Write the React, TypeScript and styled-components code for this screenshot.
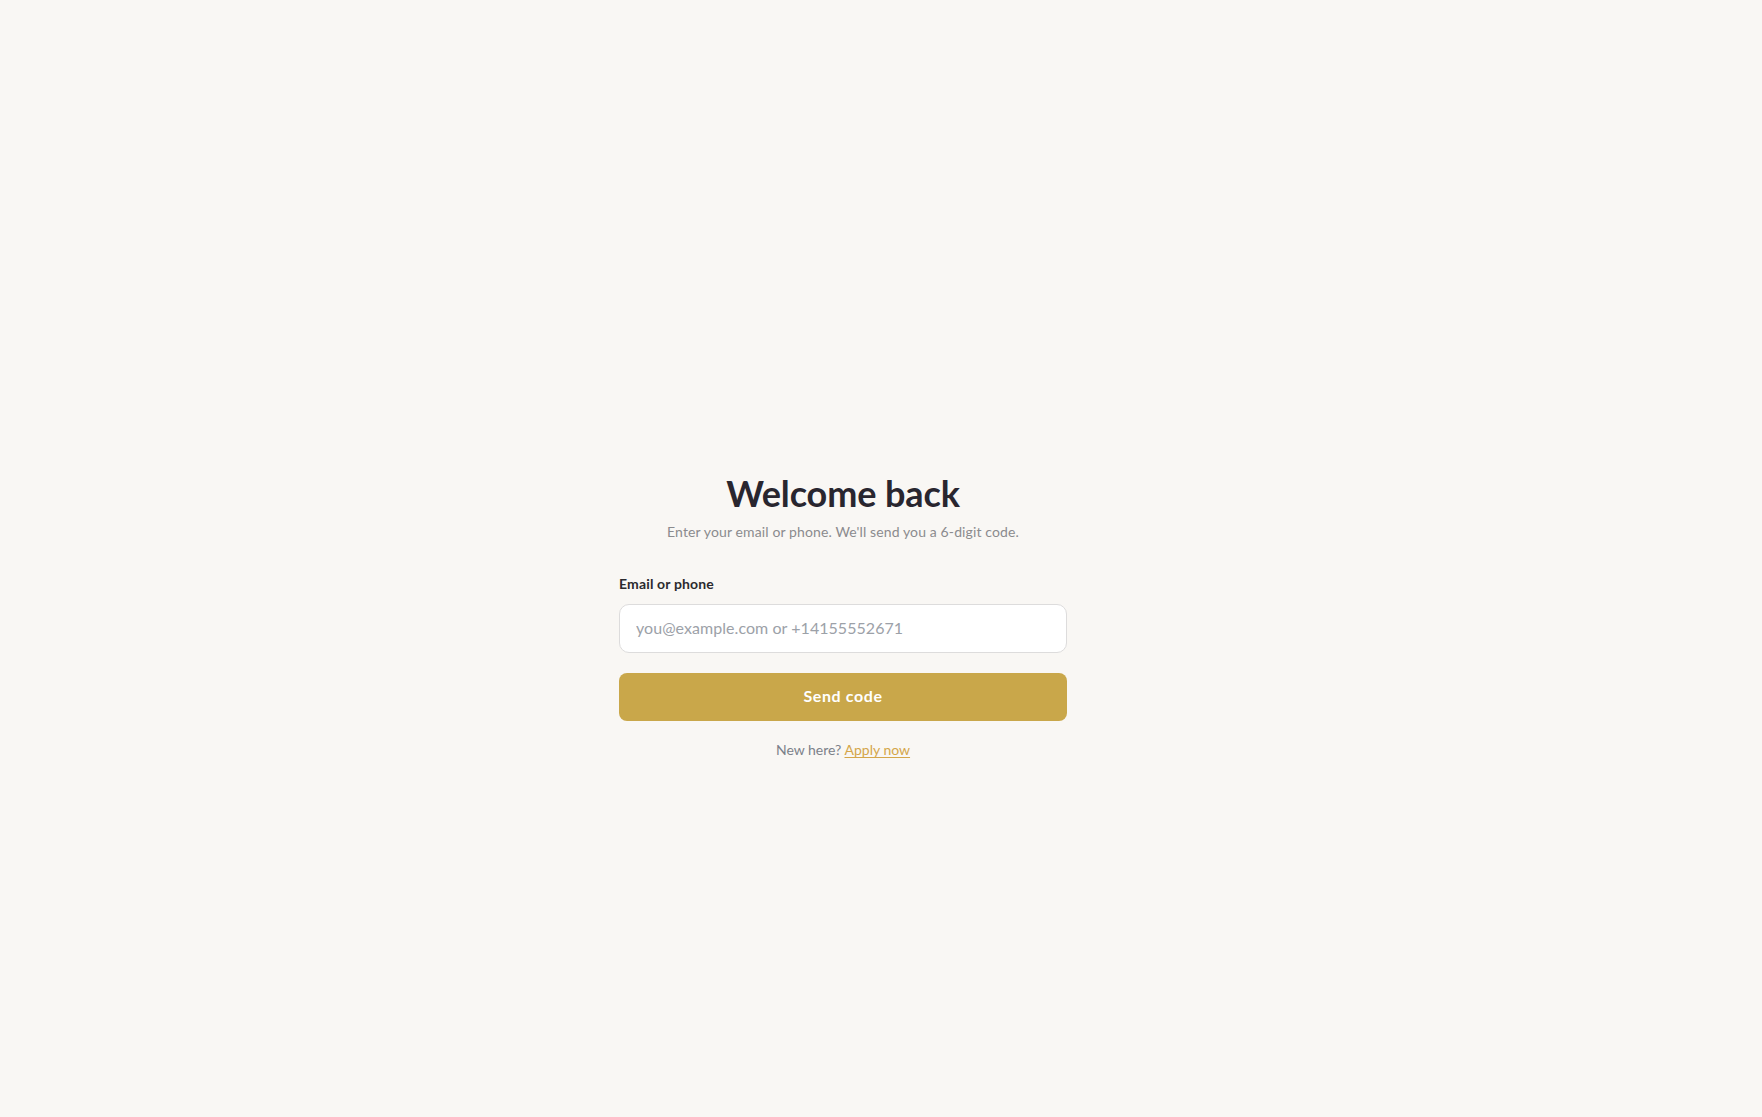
import React from "react";
import styled, { createGlobalStyle } from "styled-components";

const Global = createGlobalStyle`
  *, *::before, *::after { box-sizing: border-box; }
  html, body { margin: 0; padding: 0; }
  body {
    background: #f9f7f4;
    font-family: "Lato", "Noto Sans", sans-serif;
    color: #29262f;
  }
`;

const Page = styled.main`
  min-height: 100vh;
  display: flex;
  align-items: center;
  justify-content: center;
  padding: 116px 76px 0 0;
`;

const Card = styled.div`
  width: 448px;
  display: flex;
  flex-direction: column;
`;

const Header = styled.header`
  display: flex;
  flex-direction: column;
  align-items: center;
  margin-bottom: 32px;
`;

const Title = styled.h1`
  margin: 0;
  font-size: 36px;
  line-height: 40px;
  font-weight: 700;
  letter-spacing: -0.1px;
  color: #29262f;
`;

const Subtitle = styled.p`
  margin: 9px 0 0;
  font-size: 14px;
  line-height: 20px;
  font-weight: 400;
  letter-spacing: 0.12px;
  color: #8b8b8e;
`;

const Form = styled.form`
  display: flex;
  flex-direction: column;
`;

const Label = styled.label`
  font-size: 14px;
  line-height: 20px;
  font-weight: 700;
  letter-spacing: 0.15px;
  color: #2b2a2e;
  margin-bottom: 10px;
`;

const Input = styled.input`
  width: 100%;
  height: 49px;
  padding: 0 16px 2px;
  border: 1px solid #dddcdc;
  border-radius: 10px;
  background: #ffffff;
  font-family: "Lato", "Noto Sans", sans-serif;
  font-size: 16px;
  letter-spacing: 0.05px;
  color: #29262f;
  outline: none;
  &::placeholder {
    color: #9ca1a8;
    opacity: 1;
  }
`;

const Button = styled.button`
  margin-top: 20px;
  height: 48px;
  width: 100%;
  padding: 0 0 3px;
  border: none;
  border-radius: 8px;
  background: #c9a74a;
  color: #ffffff;
  font-family: "Lato", "Noto Sans", sans-serif;
  font-size: 16px;
  font-weight: 700;
  letter-spacing: 0.6px;
  cursor: pointer;
`;

const Footer = styled.p`
  margin: 19px 0 0;
  text-align: center;
  font-size: 14px;
  line-height: 20px;
  color: #7c818a;
`;

const Link = styled.a`
  color: #d4a64a;
  text-decoration: underline;
  text-underline-offset: 2px;
  cursor: pointer;
`;

export default function App() {
  return (
    <>
      <Global />
      <Page>
        <Card>
          <Header>
            <Title>Welcome back</Title>
            <Subtitle>Enter your email or phone. We'll send you a 6-digit code.</Subtitle>
          </Header>
          <Form onSubmit={(e) => e.preventDefault()}>
            <Label htmlFor="identity">Email or phone</Label>
            <Input id="identity" type="text" placeholder="you@example.com or +14155552671" />
            <Button type="submit">Send code</Button>
          </Form>
          <Footer>
            New here? <Link href="#apply">Apply now</Link>
          </Footer>
        </Card>
      </Page>
    </>
  );
}
